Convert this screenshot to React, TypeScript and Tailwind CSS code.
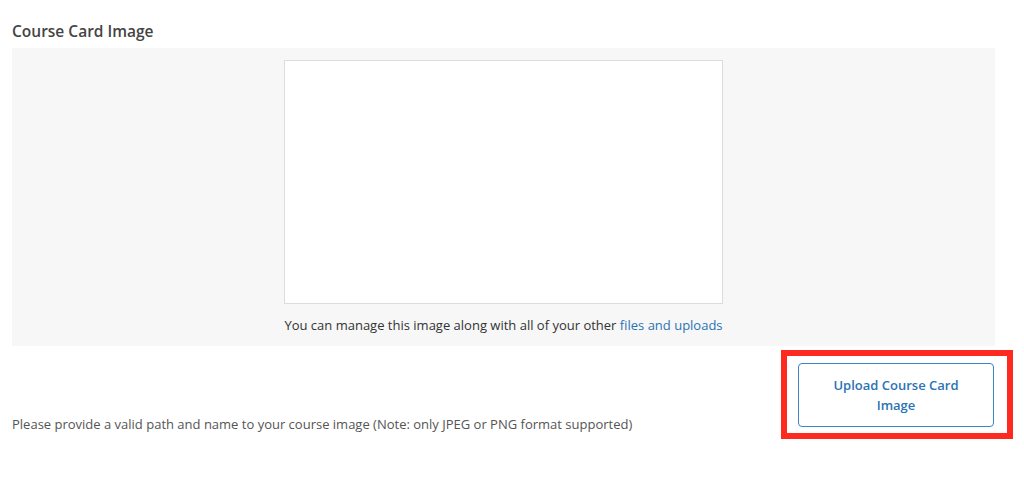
export default function App() {
  return (
    <div className="w-[1024px] h-[480px] bg-white pl-3 font-['Open_Sans',sans-serif]">
      <h2 className="pt-[20px] text-[15.5px] leading-[22px] font-semibold text-[#444]">Course Card Image</h2>
      <div className="mt-[6px] w-[983px] bg-[#f7f7f7] pt-3 pb-[11px] flex flex-col items-center">
        <div className="w-[439px] h-[244px] border border-[#dcdcdc] bg-white" />
        <p className="mt-[11px] text-[13px] leading-[20px] text-[#333]">
          You can manage this image along with all of your other{" "}
          <a className="text-[#2a73b5]" href="#">files and uploads</a>
        </p>
      </div>
      <div className="mt-1 w-[1001px] flex justify-between items-end">
        <p className="mb-[5px] text-[13px] leading-[20px] text-[#555]">
          Please provide a valid path and name to your course image (Note: only JPEG or PNG format supported)
        </p>
        <div className="w-[232px] h-[89px] border-[6px] border-[#ff2a1f] pl-[11px] pt-[7px]">
          <button className="w-[196px] h-[64px] border border-[#3a86c4] rounded-[4px] bg-white text-[13px] leading-[20px] font-semibold text-[#2a73b5] flex items-center justify-center px-6 text-center">
            Upload Course Card Image
          </button>
        </div>
      </div>
    </div>
  );
}
